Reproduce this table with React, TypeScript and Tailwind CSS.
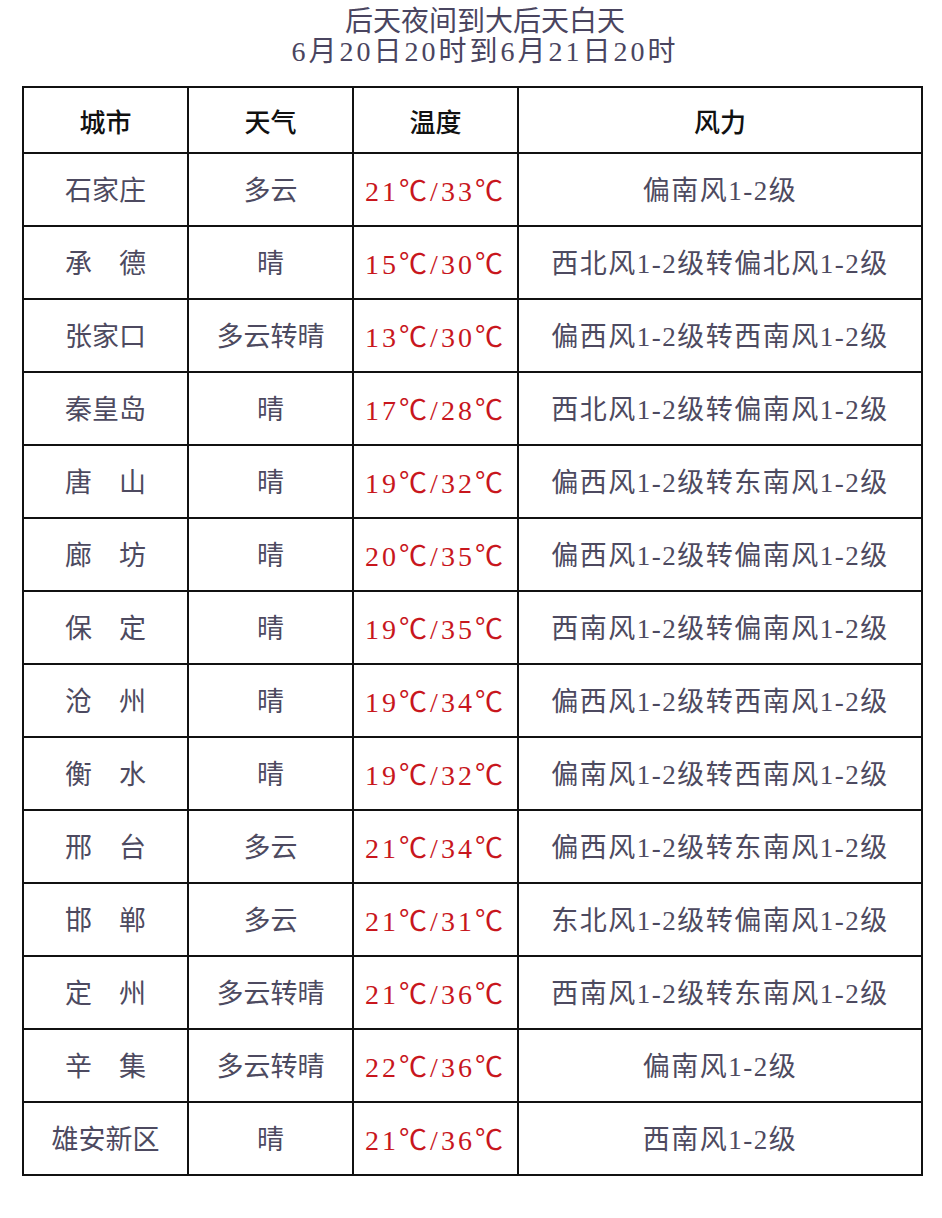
const ROWS: [string, string, string, string][] = [
  ["石家庄", "多云", "21℃/33℃", "偏南风1-2级"],
  ["承　德", "晴", "15℃/30℃", "西北风1-2级转偏北风1-2级"],
  ["张家口", "多云转晴", "13℃/30℃", "偏西风1-2级转西南风1-2级"],
  ["秦皇岛", "晴", "17℃/28℃", "西北风1-2级转偏南风1-2级"],
  ["唐　山", "晴", "19℃/32℃", "偏西风1-2级转东南风1-2级"],
  ["廊　坊", "晴", "20℃/35℃", "偏西风1-2级转偏南风1-2级"],
  ["保　定", "晴", "19℃/35℃", "西南风1-2级转偏南风1-2级"],
  ["沧　州", "晴", "19℃/34℃", "偏西风1-2级转西南风1-2级"],
  ["衡　水", "晴", "19℃/32℃", "偏南风1-2级转西南风1-2级"],
  ["邢　台", "多云", "21℃/34℃", "偏西风1-2级转东南风1-2级"],
  ["邯　郸", "多云", "21℃/31℃", "东北风1-2级转偏南风1-2级"],
  ["定　州", "多云转晴", "21℃/36℃", "西南风1-2级转东南风1-2级"],
  ["辛　集", "多云转晴", "22℃/36℃", "偏南风1-2级"],
  ["雄安新区", "晴", "21℃/36℃", "西南风1-2级"],
];

const FONT = "font-['Liberation_Serif','Noto_Sans_CJK_SC',serif]";

export default function App() {
  return (
    <div className={`w-[942px] h-[1218px] bg-white ${FONT}`}>
      <div className="flex flex-col items-center pl-7 pt-[7px] text-[28px] leading-[30px] text-[#4a4560]">
        <div>后天夜间到大后天白天</div>
        <div className="tracking-[3px]">6月20日20时到6月21日20时</div>
      </div>
      <table className="ml-[22px] mt-[19px] w-[901px] table-fixed border-collapse">
        <colgroup>
          <col className="w-[165px]" />
          <col className="w-[165px]" />
          <col className="w-[165px]" />
          <col />
        </colgroup>
        <thead>
          <tr className="h-[66px]">
            {["城市", "天气", "温度", "风力"].map((h) => (
              <th
                key={h}
                className="border-2 border-[#111] pt-[6px] text-center align-middle text-[26px] font-medium text-[#111]"
              >
                {h}
              </th>
            ))}
          </tr>
        </thead>
        <tbody>
          {ROWS.map(([city, sky, temp, wind]) => (
            <tr key={city} className="h-[73px] text-[27px] text-[#4d4a60]">
              <td className="border-2 border-[#111] pt-[4px] text-center align-middle">{city}</td>
              <td className="border-2 border-[#111] pt-[4px] text-center align-middle">{sky}</td>
              <td className="border-2 border-[#111] pt-[4px] text-center align-middle text-[28px] tracking-[3px] text-[#c8161d]">
                {temp}
              </td>
              <td className="border-2 border-[#111] pt-[4px] text-center align-middle tracking-[1.5px]">
                {wind}
              </td>
            </tr>
          ))}
        </tbody>
      </table>
    </div>
  );
}
